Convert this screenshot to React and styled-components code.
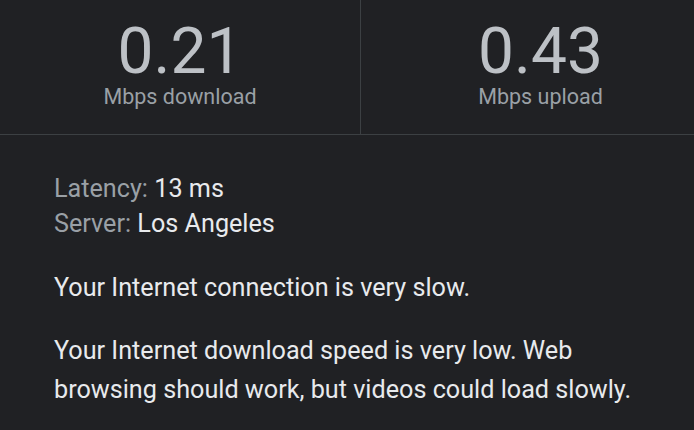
import React from "react";
import styled, { createGlobalStyle } from "styled-components";

const GlobalStyle = createGlobalStyle`
  html, body {
    margin: 0;
    padding: 0;
    background: #202124;
    overflow: hidden;
  }
  body {
    font-family: Roboto, "Liberation Sans", sans-serif;
  }
`;

const Page = styled.div`
  width: 720px;
  height: 430px;
  background: #202124;
  color: #e8eaed;
`;

const Stats = styled.div`
  display: grid;
  grid-template-columns: 360px 1fr;
  height: 134px;
  border-bottom: 1px solid #3c4043;
`;

const Stat = styled.div`
  display: flex;
  flex-direction: column;
  align-items: center;
  padding-top: 19px;
  border-left: ${(props) => (props.$divided ? "1px solid #3c4043" : "none")};
`;

const Value = styled.div`
  font-size: 64px;
  line-height: 66px;
  color: #bdc1c6;
`;

const Unit = styled.div`
  font-size: 21.5px;
  line-height: 24px;
  color: #9aa0a6;
`;

const Details = styled.div`
  padding: 36px 54px 0;
`;

const InfoBlock = styled.div`
  margin-bottom: 27px;
`;

const InfoLine = styled.div`
  font-size: 25.2px;
  line-height: 35px;
  color: #e8eaed;
`;

const InfoLabel = styled.span`
  color: #9aa0a6;
`;

const Message = styled.p`
  margin: 0 0 24px;
  font-size: 25.2px;
  line-height: 39px;
  color: #e8eaed;
`;

const stats = [
  { value: "0.21", unit: "Mbps download" },
  { value: "0.43", unit: "Mbps upload" },
];

const App = () => {
  return (
    <>
      <GlobalStyle />
      <Page>
        <Stats>
          {stats.map((s, i) => (
            <Stat key={s.unit} $divided={i > 0}>
              <Value>{s.value}</Value>
              <Unit>{s.unit}</Unit>
            </Stat>
          ))}
        </Stats>
        <Details>
          <InfoBlock>
            <InfoLine>
              <InfoLabel>Latency:</InfoLabel> 13 ms
            </InfoLine>
            <InfoLine>
              <InfoLabel>Server:</InfoLabel> Los Angeles
            </InfoLine>
          </InfoBlock>
          <Message>Your Internet connection is very slow.</Message>
          <Message>
            Your Internet download speed is very low. Web browsing should work,
            but videos could load slowly.
          </Message>
        </Details>
      </Page>
    </>
  );
};

export default App;
